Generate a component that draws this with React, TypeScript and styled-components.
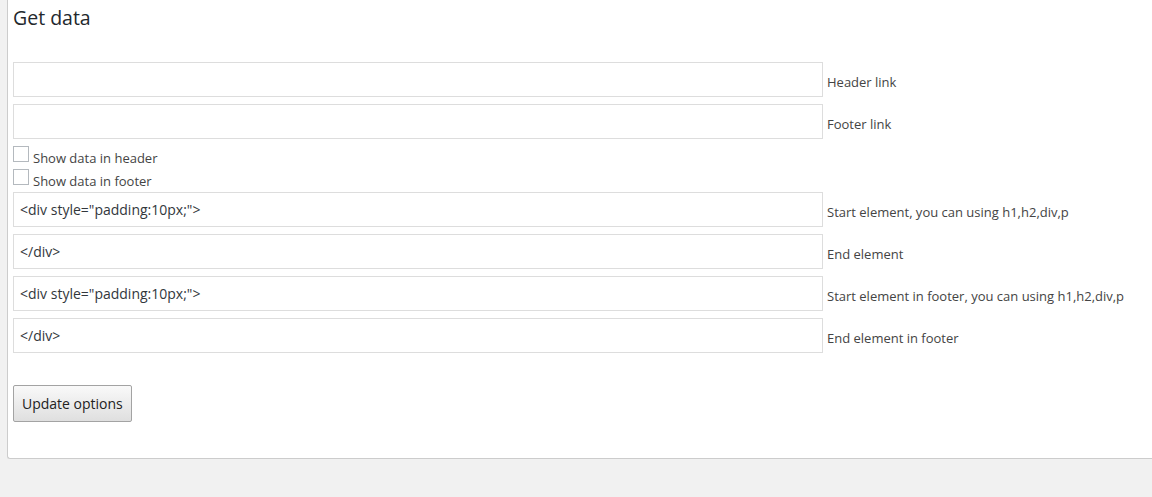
import React from "react";
import styled, { createGlobalStyle } from "styled-components";

const Global = createGlobalStyle`
  html, body {
    margin: 0;
    padding: 0;
    background: #f1f1f1;
    font-family: "Open Sans", "Liberation Sans", sans-serif;
    font-size: 13px;
    color: #444;
  }
`;

const Panel = styled.div`
  margin-left: 7px;
  background: #fff;
  border-left: 1px solid #ccc;
  border-bottom: 1px solid #ccc;
  border-bottom-left-radius: 3px;
  padding: 4px 0 36px 5px;
`;

const Title = styled.h2`
  margin: 0 0 30px;
  font-size: 19.5px;
  line-height: 28px;
  font-weight: 400;
  color: #23282d;
`;

const Form = styled.form`
  display: flex;
  flex-direction: column;
  gap: 7px;
`;

const FieldRow = styled.div`
  display: flex;
  align-items: flex-start;
  height: 35px;
`;

const TextInput = styled.input`
  box-sizing: border-box;
  width: 810px;
  height: 35px;
  margin: 0;
  padding: 0 6px;
  border: 1px solid #ddd;
  background: #fff;
  font-family: "Open Sans", "Liberation Sans", sans-serif;
  font-size: 14px;
  color: #32373c;
  outline: none;
`;

const FieldLabel = styled.label`
  margin-left: 4px;
  padding-top: 11px;
  line-height: 18px;
  color: #444;
  white-space: nowrap;
`;

const CheckRow = styled.label`
  display: flex;
  align-items: flex-start;
  height: 16px;
`;

const Box = styled.span`
  box-sizing: border-box;
  width: 16px;
  height: 16px;
  border: 1px solid #b4b9be;
  background: #fff;
  flex: none;
`;

const CheckText = styled.span`
  margin-left: 4px;
  padding-top: 3px;
  line-height: 18px;
  color: #444;
`;

const Actions = styled.div`
  margin-top: 25px;
`;

const Button = styled.button`
  height: 37px;
  padding: 0 8px;
  margin: 0;
  border: 1px solid #a3a3a3;
  border-radius: 2px;
  background: linear-gradient(to bottom, #f9f9f9, #dfdfdf);
  font-family: "Open Sans", "Liberation Sans", sans-serif;
  font-size: 14px;
  color: #222;
  cursor: pointer;
`;

const fields = [
  { value: "", label: "Header link" },
  { value: "", label: "Footer link" },
];

const elements = [
  { value: '<div style="padding:10px;">', label: "Start element, you can using h1,h2,div,p" },
  { value: "</div>", label: "End element" },
  { value: '<div style="padding:10px;">', label: "Start element in footer, you can using h1,h2,div,p" },
  { value: "</div>", label: "End element in footer" },
];

export default function App() {
  return (
    <>
      <Global />
      <Panel>
        <Title>Get data</Title>
        <Form onSubmit={(e) => e.preventDefault()}>
          {fields.map((f) => (
            <FieldRow key={f.label}>
              <TextInput defaultValue={f.value} />
              <FieldLabel>{f.label}</FieldLabel>
            </FieldRow>
          ))}
          <CheckRow>
            <Box />
            <CheckText>Show data in header</CheckText>
          </CheckRow>
          <CheckRow>
            <Box />
            <CheckText>Show data in footer</CheckText>
          </CheckRow>
          {elements.map((f) => (
            <FieldRow key={f.label}>
              <TextInput defaultValue={f.value} />
              <FieldLabel>{f.label}</FieldLabel>
            </FieldRow>
          ))}
          <Actions>
            <Button type="submit">Update options</Button>
          </Actions>
        </Form>
      </Panel>
    </>
  );
}
